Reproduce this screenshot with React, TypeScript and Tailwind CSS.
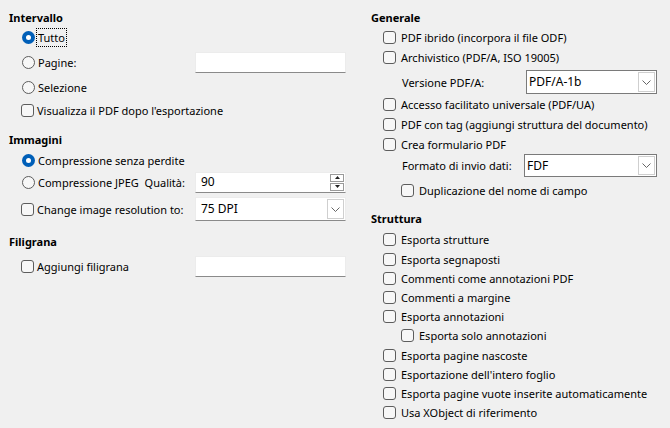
import React from 'react';

const font = { fontFamily: '"Noto Sans", "Segoe UI", sans-serif' };

const Radio = ({ checked }: { checked?: boolean }) =>
  checked ? (
    <span className="w-[13px] h-[13px] rounded-full bg-[#005fb8] flex items-center justify-center shrink-0">
      <span className="w-[5px] h-[5px] rounded-full bg-white" />
    </span>
  ) : (
    <span className="w-[13px] h-[13px] rounded-full border border-[#5d5d5d] bg-[#f7f7f7] shrink-0" />
  );

const Check = () => (
  <span className="w-[13px] h-[13px] rounded-[3px] border border-[#5d5d5d] bg-[#f7f7f7] shrink-0" />
);

const Chevron = () => (
  <svg width="9" height="5" viewBox="0 0 9 5" fill="none">
    <path d="M0.5 0.5 L4.5 4.5 L8.5 0.5" stroke="#555" strokeWidth="0.9" />
  </svg>
);

const TextBox = ({ value, className = '' }: { value?: string; className?: string }) => (
  <div
    className={`h-[21px] bg-white border border-[#ececec] border-b-[#8a8a8a] flex items-center px-[5px] ${className}`}
  >
    {value}
  </div>
);

const Select = ({ value, bordered, className = '' }: { value: string; bordered?: boolean; className?: string }) => (
  <div
    className={`bg-white flex items-center ${
      bordered ? 'border border-[#7a7a7a]' : 'border border-[#ececec] border-b-[#8a8a8a]'
    } ${className}`}
  >
    <span className="flex-1 pl-[2px] text-[12px]">{value}</span>
    <span className="w-[17px] self-stretch m-[1px] border border-[#cfcfcf] bg-white flex items-center justify-center">
      <Chevron />
    </span>
  </div>
);

const Heading = ({ children, className = '' }: { children: React.ReactNode; className?: string }) => (
  <div className={`h-[18px] flex items-center font-bold ${className}`}>{children}</div>
);

const CheckRow = ({ label, indent }: { label: string; indent?: boolean }) => (
  <div className={`h-[19.2px] flex items-center gap-[5px] ${indent ? 'pl-[30px]' : 'pl-[12px]'}`}>
    <Check />
    <span>{label}</span>
  </div>
);

export default function App() {
  return (
    <div
      className="w-[670px] h-[428px] bg-[#f0f0f0] text-black text-[11px] leading-none whitespace-nowrap flex overflow-hidden"
      style={font}
    >
      {/* Left column */}
      <div className="w-[362px] pl-[9px] pt-[8px] flex flex-col">
        <Heading>Intervallo</Heading>
        <div className="h-[23px] pl-[13px] flex items-center gap-[1px]">
          <Radio checked />
          <span className="border border-dotted border-black px-[1px] py-[3px]">Tutto</span>
        </div>
        <div className="h-[26px] pl-[13px] flex items-center">
          <div className="w-[173px] flex items-center gap-[3px]">
            <Radio />
            <span>Pagine:</span>
          </div>
          <TextBox className="w-[151px]" />
        </div>
        <div className="h-[24px] pl-[13px] flex items-center gap-[3px]">
          <Radio />
          <span>Selezione</span>
        </div>
        <div className="h-[22px] pl-[12px] flex items-center gap-[3px]">
          <Check />
          <span>Visualizza il PDF dopo l'esportazione</span>
        </div>

        <Heading className="mt-[9px]">Immagini</Heading>
        <div className="h-[22px] mt-[1px] pl-[13px] flex items-center gap-[3px]">
          <Radio checked />
          <span>Compressione senza perdite</span>
        </div>
        <div className="h-[22px] pl-[13px] flex items-center">
          <div className="w-[173px] flex items-center gap-[3px]">
            <Radio />
            <span>Compressione JPEG&nbsp; Qualità:</span>
          </div>
          <div className="w-[151px] h-[21px] bg-white border border-[#ececec] border-b-[#8a8a8a] flex items-center">
            <span className="flex-1 pl-[5px] text-[12px]">90</span>
            <span className="w-[14px] mr-[1px] flex flex-col gap-[1px]">
              <span className="h-[8px] border border-[#9a9a9a] flex items-center justify-center">
                <svg width="5" height="3" viewBox="0 0 5 3">
                  <path d="M0 3 L2.5 0 L5 3 Z" fill="#222" />
                </svg>
              </span>
              <span className="h-[8px] border border-[#9a9a9a] flex items-center justify-center">
                <svg width="5" height="3" viewBox="0 0 5 3">
                  <path d="M0 0 L2.5 3 L5 0 Z" fill="#222" />
                </svg>
              </span>
            </span>
          </div>
        </div>
        <div className="h-[26px] mt-[3px] pl-[12px] flex items-center">
          <div className="w-[174px] flex items-center gap-[3px]">
            <Check />
            <span>Change image resolution to:</span>
          </div>
          <Select value="75 DPI" className="w-[151px] h-[24px] pl-[3px]" />
        </div>

        <Heading className="mt-[10px]">Filigrana</Heading>
        <div className="h-[22px] mt-[5px] pl-[12px] flex items-center">
          <div className="w-[174px] flex items-center gap-[3px]">
            <Check />
            <span>Aggiungi filigrana</span>
          </div>
          <TextBox className="w-[151px]" />
        </div>
      </div>

      {/* Right column */}
      <div className="flex-1 pl-[9px] pt-[8px] flex flex-col">
        <Heading>Generale</Heading>
        <div className="h-[20px] mt-[1px] pl-[12px] flex items-center gap-[5px]">
          <Check />
          <span>PDF ibrido (incorpora il file ODF)</span>
        </div>
        <div className="h-[20px] pl-[12px] flex items-center gap-[5px]">
          <Check />
          <span>Archivistico (PDF/A, ISO 19005)</span>
        </div>
        <div className="h-[24px] mt-[3px] pl-[31px] flex items-center">
          <span className="w-[124px]">Versione PDF/A:</span>
          <Select value="PDF/A-1b" bordered className="w-[131px] h-[24px]" />
        </div>
        <div className="h-[20px] pl-[12px] flex items-center gap-[5px]">
          <Check />
          <span>Accesso facilitato universale (PDF/UA)</span>
        </div>
        <div className="h-[20px] pl-[12px] flex items-center gap-[5px]">
          <Check />
          <span>PDF con tag (aggiungi struttura del documento)</span>
        </div>
        <div className="h-[20px] pl-[12px] flex items-center gap-[5px]">
          <Check />
          <span>Crea formulario PDF</span>
        </div>
        <div className="h-[23px] pl-[31px] flex items-center">
          <span className="w-[122px]">Formato di invio dati:</span>
          <Select value="FDF" bordered className="w-[133px] h-[23px]" />
        </div>
        <div className="h-[26px] pl-[30px] flex items-center gap-[5px]">
          <Check />
          <span>Duplicazione del nome di campo</span>
        </div>

        <Heading className="mt-[6px]">Struttura</Heading>
        <div className="mt-[3.4px] flex flex-col">
          <CheckRow label="Esporta strutture" />
          <CheckRow label="Esporta segnaposti" />
          <CheckRow label="Commenti come annotazioni PDF" />
          <CheckRow label="Commenti a margine" />
          <CheckRow label="Esporta annotazioni" />
          <CheckRow label="Esporta solo annotazioni" indent />
          <CheckRow label="Esporta pagine nascoste" />
          <CheckRow label="Esportazione dell'intero foglio" />
          <CheckRow label="Esporta pagine vuote inserite automaticamente" />
          <CheckRow label="Usa XObject di riferimento" />
        </div>
      </div>
    </div>
  );
}
